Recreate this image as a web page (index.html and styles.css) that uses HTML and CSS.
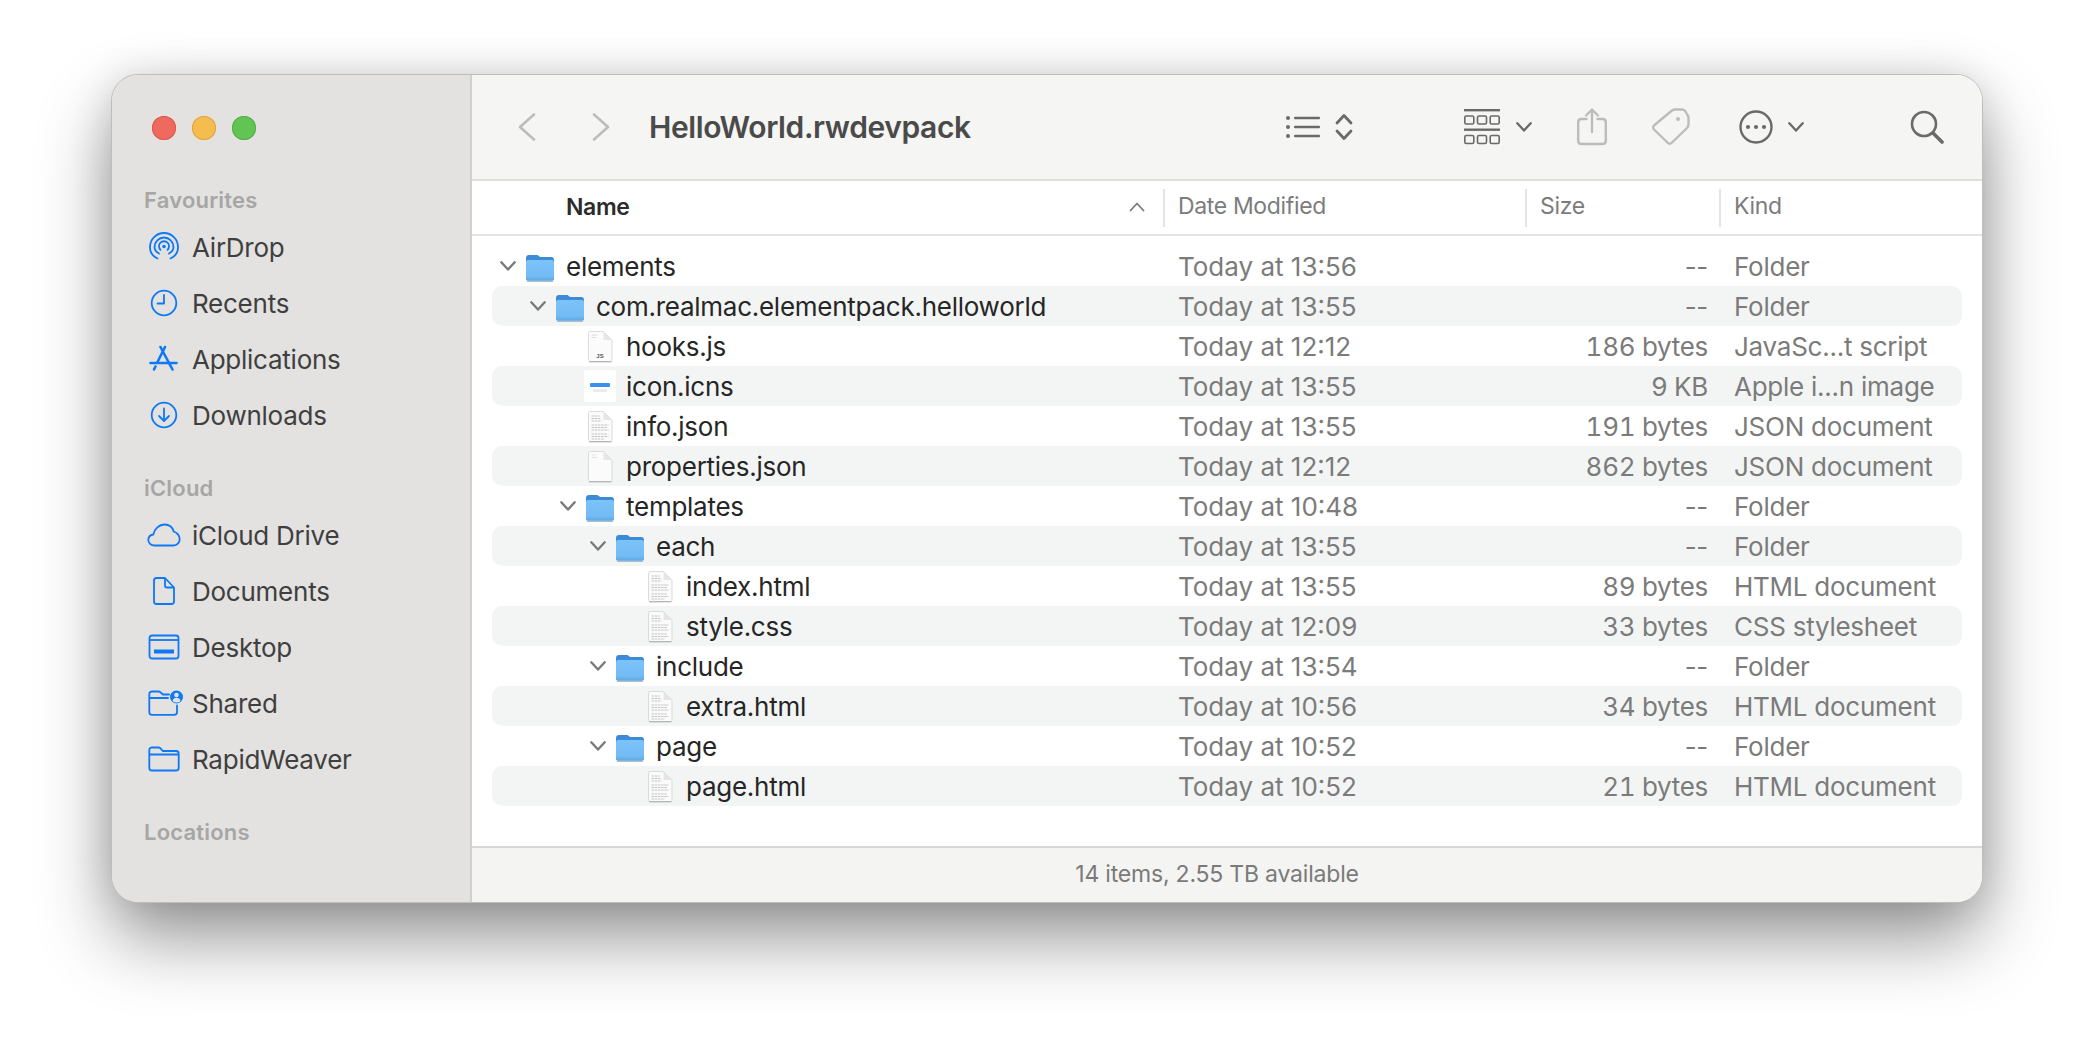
FILE: index.html

```html
<!DOCTYPE html>
<html lang="en">
<head>
    <meta charset="UTF-8">
    <title>HelloWorld.rwdevpack</title>
    <link rel="stylesheet" href="styles.css">
</head>
<body>
    <svg class="defs" width="0" height="0">
        <defs>
            <linearGradient id="folderFront" x1="0" y1="0" x2="0" y2="1">
                <stop offset="0" stop-color="#7cc3f8"/>
                <stop offset="1" stop-color="#6fb8f2"/>
            </linearGradient>
            <symbol id="folder" viewBox="0 0 32 32">
                <path d="M2 7.500C2 5.500 3 4.500 5 4.500h7.500c1.200 0 1.800.4 2.500 1.100l1 1h11.500c1.300 0 2.500 1 2.500 2.500v3H2z" fill="#3d8bd8"/>
                <rect x="2" y="9.500" width="28" height="21" rx="2" fill="url(#folderFront)"/>
                <path d="M2 27.500h28M2 29h28" stroke="#5da6e2" stroke-width=".7"/>
                <path d="M3 31h26" stroke="#b9b9b9" stroke-width="1"/>
            </symbol>
            <symbol id="doc" viewBox="0 0 27 33">
                <path d="M2 3c0-1 .6-1.500 1.500-1.500H17L25.500 10v20c0 1-.6 1.500-1.500 1.500H3.500C2.600 31.500 2 31 2 30z" fill="#fbfbfb" stroke="#d2d2d2" stroke-width=".8"/>
                <path d="M17 1.500V10h8.500z" fill="#e6e6e6"/>
                <path d="M2.500 31.800h22.500" stroke="#a8a8a8" stroke-width="1"/>
            </symbol>
            <symbol id="doc-text" viewBox="0 0 27 33">
                <use href="#doc"/>
                <path d="M5 6h8M5 8.500h9M5 11h10M5 15h17M5 17.500h16M5 20h17M5 24h16M5 26.500h17M5 29h13" stroke="#bcbcbc" stroke-width=".9" stroke-dasharray="2.500 .7"/>
            </symbol>
            <symbol id="doc-js" viewBox="0 0 27 33">
                <use href="#doc"/>
                <path d="M5 5h6M5 7.500h4" stroke="#d4d4d4" stroke-width=".8"/>
                <text x="13.500" y="28" text-anchor="middle" class="js-label">JS</text>
            </symbol>
            <symbol id="doc-plain" viewBox="0 0 27 33">
                <use href="#doc"/>
                <path d="M5 5h4M5 7.500h6" stroke="#dcdcdc" stroke-width=".8"/>
            </symbol>
            <symbol id="twisty" viewBox="0 0 16 10">
                <path d="M1.300 1.300 8 8.500l6.700-7.200" fill="none" stroke="currentColor" stroke-width="2.400" stroke-linecap="round" stroke-linejoin="round"/>
            </symbol>
        </defs>
    </svg>

    <div class="window">
        <aside class="sidebar">
            <div class="traffic">
                <span class="light red"></span>
                <span class="light yellow"></span>
                <span class="light green"></span>
            </div>

            <div class="side-label">Favourites</div>
            <div class="side-item">
                <span class="side-icon">
                    <svg viewBox="0 0 32 32" width="32" height="32"><g fill="none" stroke="currentColor" stroke-width="1.800" stroke-linecap="round"><path d="M9.500 27.500C5 25.500 2 21 2 16A14 14 0 0 1 30 16c0 5-3 9.500-7.500 11.500"/><path d="M11 22.500C8.200 21 6.500 18.700 6.500 16a9.500 9.500 0 0 1 19 0c0 2.700-1.700 5-4.500 6.500"/><path d="M12.500 18.800A5 5 0 1 1 19.500 18.800"/></g><circle cx="16" cy="15.500" r="1.800" fill="currentColor"/></svg>
                </span>
                AirDrop
            </div>
            <div class="side-item">
                <span class="side-icon">
                    <svg viewBox="0 0 28 28" width="28" height="28"><g fill="none" stroke="currentColor" stroke-width="1.800" stroke-linecap="round" stroke-linejoin="round"><circle cx="14" cy="14" r="12.300"/><path d="M14 6v8.500H7.500"/></g></svg>
                </span>
                Recents
            </div>
            <div class="side-item">
                <span class="side-icon">
                    <svg viewBox="0 0 30 28" width="30" height="28"><g fill="none" stroke="currentColor" stroke-width="2.600" stroke-linecap="round"><path d="M11.500 2 23.500 24.500"/><path d="M16 2 8.500 17"/><path d="M6.500 21.500 5 24.500"/><path d="M1.500 18h26"/></g></svg>
                </span>
                Applications
            </div>
            <div class="side-item">
                <span class="side-icon">
                    <svg viewBox="0 0 28 28" width="28" height="28"><g fill="none" stroke="currentColor" stroke-width="1.800" stroke-linecap="round" stroke-linejoin="round"><circle cx="14" cy="14" r="12.300"/><path d="M14 7.500v12M9 15l5 5 5-5"/></g></svg>
                </span>
                Downloads
            </div>

            <div class="side-label side-gap">iCloud</div>
            <div class="side-item">
                <span class="side-icon">
                    <svg viewBox="0 0 34 24" width="34" height="24"><path d="M7.500 22.500C4 22.500 1.300 20 1.300 17c0-3 2.200-5 5-5.500C7.500 6 12 1.500 17.500 1.500c4.500 0 8 2.800 9.200 7C30 9.500 32.700 12.700 32.700 16c0 3.700-2.700 6.500-6.200 6.500z" fill="none" stroke="currentColor" stroke-width="1.800" stroke-linejoin="round"/></svg>
                </span>
                iCloud Drive
            </div>
            <div class="side-item">
                <span class="side-icon">
                    <svg viewBox="0 0 24 28" width="24" height="28"><g fill="none" stroke="currentColor" stroke-width="1.800" stroke-linejoin="round"><path d="M2 3.500C2 2 2.800 1 4.500 1h8.500l9 9.500v14c0 1.500-.8 2.500-2.500 2.500h-15C2.800 27 2 26 2 24.500z"/><path d="M13 1v7.500c0 1.200.7 2 2 2h7"/></g></svg>
                </span>
                Documents
            </div>
            <div class="side-item">
                <span class="side-icon">
                    <svg viewBox="0 0 32 26" width="32" height="26"><g fill="none" stroke="currentColor" stroke-width="1.800"><rect x="1.500" y="1.500" width="29" height="23" rx="2.500"/><path d="M1.500 6h29"/></g><rect x="6" y="15.500" width="20" height="4" fill="currentColor"/></svg>
                </span>
                Desktop
            </div>
            <div class="side-item">
                <span class="side-icon icon-shared">
                    <svg viewBox="0 0 36 26" width="36" height="26"><path d="M26 24.800H4C2.500 24.800 1.300 24 1.300 22.300V4C1.300 2.500 2.300 1.500 4 1.500h6.500c1 0 1.500.3 2 .8L15 4.500h6M1.300 8H20M29 15.500v6.800c0 1.700-1.200 2.500-2.800 2.500" fill="none" stroke="currentColor" stroke-width="1.800" stroke-linecap="round"/><circle cx="28.500" cy="7" r="6.500" fill="currentColor"/><circle cx="28.500" cy="5" r="2.300" fill="#e3e2e0"/><path d="M24.500 11c.5-2 2-3.200 4-3.200s3.500 1.200 4 3.200c-1 1-2.500 1.500-4 1.500s-3-.5-4-1.500z" fill="#e3e2e0"/></svg>
                </span>
                Shared
            </div>
            <div class="side-item">
                <span class="side-icon">
                    <svg viewBox="0 0 32 26" width="32" height="26"><path d="M4 24.500h24c1.700 0 2.700-1 2.700-2.500V7.500C30.700 6 29.700 5 28 5H15L12.500 2.300C12 1.800 11.500 1.500 10.500 1.500H4C2.300 1.500 1.300 2.500 1.300 4v18c0 1.500 1 2.500 2.700 2.500zM1.300 8.500h29.400" fill="none" stroke="currentColor" stroke-width="1.800"/></svg>
                </span>
                RapidWeaver
            </div>

            <div class="side-label side-gap">Locations</div>
        </aside>

        <main class="content">
            <header class="toolbar">
                <svg class="tool nav-back" viewBox="0 0 18 28" width="18" height="28"><path d="M16 1.500 2 14l14 12.500" fill="none" stroke="#bcbcbb" stroke-width="2.600" stroke-linecap="round" stroke-linejoin="round"/></svg>
                <svg class="tool nav-forward" viewBox="0 0 18 28" width="18" height="28"><path d="M2 1.500 16 14 2 26.500" fill="none" stroke="#bcbcbb" stroke-width="2.600" stroke-linecap="round" stroke-linejoin="round"/></svg>
                <h1 class="title">HelloWorld.rwdevpack</h1>

                <svg class="tool tool-list" viewBox="0 0 34 24" width="34" height="24"><g fill="#6a6a68"><circle cx="2" cy="3" r="2"/><circle cx="2" cy="12" r="2"/><circle cx="2" cy="21" r="2"/><rect x="8" y="1.800" width="26" height="2.400" rx="1"/><rect x="8" y="10.800" width="26" height="2.400" rx="1"/><rect x="8" y="19.800" width="26" height="2.400" rx="1"/></g></svg>
                <svg class="tool tool-updown" viewBox="0 0 18 28" width="18" height="28"><path d="M2 10 9 2.500 16 10M2 18l7 7.500 7-7.500" fill="none" stroke="#6a6a68" stroke-width="2.800" stroke-linecap="round" stroke-linejoin="round"/></svg>
                <svg class="tool tool-grid" viewBox="0 0 36 36" width="36" height="36"><g fill="none" stroke="#6a6a68" stroke-width="1.600"><rect x=".8" y="7" width="9" height="8" rx="1.500"/><rect x="13.500" y="7" width="9" height="8" rx="1.500"/><rect x="26.200" y="7" width="9" height="8" rx="1.500"/><rect x=".8" y="26.500" width="9" height="8" rx="1.500"/><rect x="13.500" y="26.500" width="9" height="8" rx="1.500"/><rect x="26.200" y="26.500" width="9" height="8" rx="1.500"/></g><rect y="0" width="36" height="2.400" fill="#6a6a68"/><rect y="19.500" width="36" height="2.400" fill="#6a6a68"/></svg>
                <svg class="tool tool-caret caret-grid" viewBox="0 0 16 10" width="16" height="10"><use href="#twisty"/></svg>
                <svg class="tool tool-share" viewBox="0 0 30 38" width="30" height="38"><g fill="none" stroke="#bcbcbb" stroke-width="2.400" stroke-linecap="round" stroke-linejoin="round"><path d="M9.500 11H4.500c-2 0-3.300 1.200-3.300 3.200v18.600c0 2 1.300 3.200 3.300 3.200h21c2 0 3.300-1.200 3.300-3.200V14.200c0-2-1.300-3.200-3.300-3.200h-5"/><path d="M15 24V2M9 7.500 15 1.500 21 7.500"/></g></svg>
                <svg class="tool tool-tag" viewBox="0 0 38 38" width="38" height="38"><path d="M2.500 17 20 2.500c1-.7 2-1 3-1h7c1.500 0 2.700.7 3.500 2l2 3.500c1 1.400 1.200 2.500 1 4v5c0 1.500-.5 2.800-1.500 4L20 34.500c-1.700 1.700-3 1.700-4.500 0L2.500 22c-1.800-1.800-1.800-3.200 0-5z" fill="none" stroke="#bcbcbb" stroke-width="2.400" stroke-linejoin="round"/><circle cx="26" cy="11" r="2" fill="#bcbcbb"/></svg>
                <svg class="tool tool-more" viewBox="0 0 34 34" width="34" height="34"><circle cx="17" cy="17" r="15.500" fill="none" stroke="#6a6a68" stroke-width="2.400"/><circle cx="9" cy="17" r="2.100" fill="#6a6a68"/><circle cx="17" cy="17" r="2.100" fill="#6a6a68"/><circle cx="25" cy="17" r="2.100" fill="#6a6a68"/></svg>
                <svg class="tool tool-caret caret-more" viewBox="0 0 16 10" width="16" height="10"><use href="#twisty"/></svg>
                <svg class="tool tool-search" viewBox="0 0 34 34" width="34" height="34"><g fill="none" stroke="#6a6a68" stroke-linecap="round"><circle cx="14" cy="14" r="12" stroke-width="2.600"/><path d="M23 23l9 9" stroke-width="3.600"/></g></svg>
            </header>

            <div class="col-head">
                <div class="head-cell head-name">
                    <span>Name</span>
                    <svg class="sort" viewBox="0 0 16 10" width="16" height="10"><path d="M1.500 8.500 8 1.500l6.500 7" fill="none" stroke="#7a7a7a" stroke-width="1.800" stroke-linecap="round" stroke-linejoin="round"/></svg>
                </div>
                <div class="head-cell">Date Modified</div>
                <div class="head-cell">Size</div>
                <div class="head-cell">Kind</div>
            </div>

            <div class="list">
                <div class="row">
                    <div class="name level-0"><svg class="twisty"><use href="#twisty"/></svg><svg class="file-icon"><use href="#folder"/></svg><span>elements</span></div>
                    <div class="date">Today at 13:56</div><div class="size size-none">--</div><div class="kind">Folder</div>
                </div>
                <div class="row">
                    <div class="name level-1"><svg class="twisty"><use href="#twisty"/></svg><svg class="file-icon"><use href="#folder"/></svg><span>com.realmac.elementpack.helloworld</span></div>
                    <div class="date">Today at 13:55</div><div class="size size-none">--</div><div class="kind">Folder</div>
                </div>
                <div class="row">
                    <div class="name level-2"><span class="twisty"></span><svg class="file-icon"><use href="#doc-js"/></svg><span>hooks.js</span></div>
                    <div class="date">Today at 12:12</div><div class="size">186 bytes</div><div class="kind">JavaSc...t script</div>
                </div>
                <div class="row">
                    <div class="name level-2"><span class="twisty"></span><span class="icns-icon"><i class="icns-blue"></i><i class="icns-grey"></i></span><span>icon.icns</span></div>
                    <div class="date">Today at 13:55</div><div class="size">9 KB</div><div class="kind">Apple i...n image</div>
                </div>
                <div class="row">
                    <div class="name level-2"><span class="twisty"></span><svg class="file-icon"><use href="#doc-text"/></svg><span>info.json</span></div>
                    <div class="date">Today at 13:55</div><div class="size">191 bytes</div><div class="kind">JSON document</div>
                </div>
                <div class="row">
                    <div class="name level-2"><span class="twisty"></span><svg class="file-icon"><use href="#doc-plain"/></svg><span>properties.json</span></div>
                    <div class="date">Today at 12:12</div><div class="size">862 bytes</div><div class="kind">JSON document</div>
                </div>
                <div class="row">
                    <div class="name level-2 is-folder"><svg class="twisty"><use href="#twisty"/></svg><svg class="file-icon"><use href="#folder"/></svg><span>templates</span></div>
                    <div class="date">Today at 10:48</div><div class="size size-none">--</div><div class="kind">Folder</div>
                </div>
                <div class="row">
                    <div class="name level-3"><svg class="twisty"><use href="#twisty"/></svg><svg class="file-icon"><use href="#folder"/></svg><span>each</span></div>
                    <div class="date">Today at 13:55</div><div class="size size-none">--</div><div class="kind">Folder</div>
                </div>
                <div class="row">
                    <div class="name level-4"><span class="twisty"></span><svg class="file-icon"><use href="#doc-text"/></svg><span>index.html</span></div>
                    <div class="date">Today at 13:55</div><div class="size">89 bytes</div><div class="kind">HTML document</div>
                </div>
                <div class="row">
                    <div class="name level-4"><span class="twisty"></span><svg class="file-icon"><use href="#doc-text"/></svg><span>style.css</span></div>
                    <div class="date">Today at 12:09</div><div class="size">33 bytes</div><div class="kind">CSS stylesheet</div>
                </div>
                <div class="row">
                    <div class="name level-3"><svg class="twisty"><use href="#twisty"/></svg><svg class="file-icon"><use href="#folder"/></svg><span>include</span></div>
                    <div class="date">Today at 13:54</div><div class="size size-none">--</div><div class="kind">Folder</div>
                </div>
                <div class="row">
                    <div class="name level-4"><span class="twisty"></span><svg class="file-icon"><use href="#doc-text"/></svg><span>extra.html</span></div>
                    <div class="date">Today at 10:56</div><div class="size">34 bytes</div><div class="kind">HTML document</div>
                </div>
                <div class="row">
                    <div class="name level-3"><svg class="twisty"><use href="#twisty"/></svg><svg class="file-icon"><use href="#folder"/></svg><span>page</span></div>
                    <div class="date">Today at 10:52</div><div class="size size-none">--</div><div class="kind">Folder</div>
                </div>
                <div class="row">
                    <div class="name level-4"><span class="twisty"></span><svg class="file-icon"><use href="#doc-text"/></svg><span>page.html</span></div>
                    <div class="date">Today at 10:52</div><div class="size">21 bytes</div><div class="kind">HTML document</div>
                </div>
            </div>

            <footer class="status">14 items, 2.55 TB available</footer>
        </main>
    </div>
</body>
</html>
```

FILE: styles.css

```css
* {
    box-sizing: border-box;
}
body {
    margin: 0;
    width: 2094px;
    height: 1050px;
    padding: 75px 0 0 112px;
    overflow: hidden;
    background: #fff;
    font-family: 'Inter', 'Liberation Sans', sans-serif;
    font-size: 26px;
    letter-spacing: -0.2px;
}
.defs {
    display: block;
    height: 0;
}
.js-label {
    font-family: 'Liberation Sans', sans-serif;
    font-size: 6px;
    font-weight: 700;
    fill: #555;
    letter-spacing: 0;
}

.window {
    display: flex;
    width: 1870px;
    height: 827px;
    border-radius: 26px;
    overflow: hidden;
    box-shadow: 0 0 0 1px #bdbdbd, 0 36px 72px rgba(0, 0, 0, 0.42), 0 0 40px rgba(0, 0, 0, 0.12);
}

/* sidebar */
.sidebar {
    flex: none;
    width: 360px;
    background: #e3e2e0;
    border-right: 2px solid #d0cfcd;
    padding-top: 41px;
    color: #3f3f3f;
}
.traffic {
    display: flex;
    gap: 16px;
    padding-left: 40px;
    margin-bottom: 41px;
}
.light {
    width: 24px;
    height: 24px;
    border-radius: 50%;
}
.red {
    background: #ee6a5f;
    box-shadow: inset 0 0 0 1px #d9574c;
}
.yellow {
    background: #f5bd4f;
    box-shadow: inset 0 0 0 1px #dfa33b;
}
.green {
    background: #61c454;
    box-shadow: inset 0 0 0 1px #52ad45;
}
.side-label {
    height: 38px;
    line-height: 38px;
    padding-left: 32px;
    font-size: 22px;
    font-weight: 600;
    letter-spacing: 0.2px;
    color: #a6a6a5;
}
.side-gap {
    margin-top: 26px;
}
.side-item {
    display: flex;
    align-items: center;
    height: 56px;
    padding-left: 31px;
    letter-spacing: -0.25px;
}
.side-icon {
    display: flex;
    justify-content: center;
    width: 40px;
    margin-right: 8px;
    margin-left: 1px;
    color: #0f78f5;
}
.side-icon svg {
    display: block;
}
.icon-shared {
    justify-content: flex-start;
    padding-left: 4px;
}

/* main side */
.content {
    flex: 1;
    display: flex;
    flex-direction: column;
    min-width: 0;
    background: #fff;
}
.toolbar {
    flex: none;
    display: flex;
    align-items: center;
    height: 106px;
    padding-left: 46px;
    background: #f5f5f3;
    border-bottom: 2px solid #dededc;
}
.tool {
    flex: none;
    display: block;
    color: #6a6a68;
}
.nav-forward {
    margin-left: 56px;
}
.title {
    width: 637px;
    margin: 0 0 0 39px;
    font-size: 30px;
    font-weight: 600;
    letter-spacing: -0.4px;
    color: #4a4a4a;
}
.tool-updown {
    margin-left: 15px;
}
.tool-grid {
    margin-left: 111px;
}
.caret-grid {
    margin-left: 16px;
}
.tool-share {
    margin-left: 45px;
}
.tool-tag {
    margin-left: 45px;
}
.tool-more {
    margin-left: 49px;
}
.caret-more {
    margin-left: 15px;
}
.tool-search {
    margin-left: 106px;
}

.col-head,
.row {
    display: grid;
    grid-template-columns: 671px 362px 194px 243px;
}
.col-head {
    flex: none;
    height: 55px;
    padding: 0 20px;
    align-items: center;
    border-bottom: 2px solid #e4e4e4;
    font-size: 23px;
    letter-spacing: -0.35px;
    color: #7c7c7c;
}
.head-cell {
    height: 38px;
    line-height: 34px;
    padding-left: 13px;
    border-left: 2px solid #e4e4e4;
}
.head-name {
    display: flex;
    align-items: center;
    justify-content: space-between;
    padding: 0 18px 2px 74px;
    border-left: 0;
    font-weight: 600;
    color: #2b2b2b;
}

.list {
    flex: 1;
    padding: 10px 20px 0;
}
.row {
    height: 40px;
    align-items: center;
    border-radius: 10px;
    color: #7b7b7b;
}
.row:nth-child(even) {
    background: #f3f5f4;
}
.name {
    display: flex;
    align-items: center;
    letter-spacing: -0.26px;
    color: #262626;
}
.level-0 {
    padding-left: 8px;
}
.level-1 {
    padding-left: 38px;
}
.level-2 {
    padding-left: 68px;
}
.level-3 {
    padding-left: 98px;
}
.level-4 {
    padding-left: 128px;
}
.twisty {
    flex: none;
    display: block;
    width: 16px;
    height: 10px;
    margin-right: 8px;
    color: #7a7a7a;
}
.file-icon {
    flex: none;
    display: block;
    width: 32px;
    height: 33px;
    margin-right: 10px;
}
.icns-icon {
    flex: none;
    display: flex;
    flex-direction: column;
    align-items: center;
    gap: 2px;
    padding-top: 13px;
    width: 32px;
    height: 32px;
    margin-right: 10px;
    border-radius: 3px;
    background: #fff;
}
.icns-blue {
    width: 20px;
    height: 4px;
    background: #3b8ff0;
    border-radius: 1px;
}
.icns-grey {
    width: 14px;
    height: 3px;
    background: #ececec;
}
.date {
    padding-left: 15px;
    letter-spacing: 0;
}
.size {
    padding-right: 11px;
    text-align: right;
    font-variant-numeric: tabular-nums;
    letter-spacing: -0.3px;
}
.size-none {
    font-variant-numeric: normal;
}
.kind {
    padding-left: 15px;
    letter-spacing: -0.25px;
}
.status {
    flex: none;
    height: 56px;
    line-height: 52px;
    padding-right: 20px;
    text-align: center;
    background: #f4f4f2;
    border-top: 2px solid #d8d8d6;
    font-size: 23px;
    color: #7a7a7a;
}
```
